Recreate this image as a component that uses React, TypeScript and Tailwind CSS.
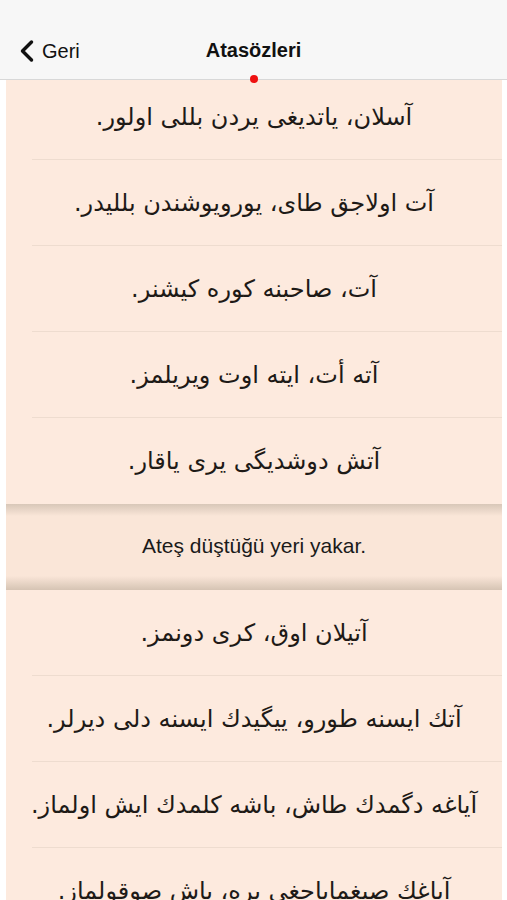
import { ChevronLeft } from "lucide-react";

const top = [
  "آسلان، یاتدیغی یردن بللی اولور.",
  "آت اولاجق طای، یورویوشندن بللیدر.",
  "آت، صاحبنه کوره کیشنر.",
  "آته أت، ایته اوت ویریلمز.",
  "آتش دوشدیگی یری یاقار.",
];

const bottom = [
  "آتیلان اوق، کری دونمز.",
  "آتك ایسنه طورو، ییگیدك ایسنه دلی دیرلر.",
  "آیاغه دگمدك طاش، باشه کلمدك ایش اولماز.",
  "آیاغك صیغمایاجغی یره، باش صوقولماز.",
];

const Row = ({ text, last }: { text: string; last?: boolean }) => (
  <div className="h-[86px] flex flex-col shrink-0">
    <div
      dir="rtl"
      className="flex-1 flex items-center justify-center whitespace-nowrap text-[24px] text-[#1e1a17]"
      style={{ fontFamily: '"DejaVu Sans", serif' }}
    >
      {text}
    </div>
    {!last && <div className="ml-[26px] h-px bg-[#eedccf]" />}
  </div>
);

export default function App() {
  return (
    <div
      className="w-[507px] h-[900px] overflow-hidden bg-white flex flex-col"
      style={{ fontFamily: '"Liberation Sans", Arial, sans-serif' }}
    >
      <div className="relative h-[80px] shrink-0 bg-[#f7f7f7] border-b border-[#d8d8d8] flex items-end pb-[10px]">
        <div className="flex items-center pl-[9px] text-[20px] text-[#111]">
          <ChevronLeft size={36} strokeWidth={2.3} className="-mr-[3px]" />
          <span>Geri</span>
        </div>
        <div className="absolute left-0 right-0 bottom-[14px] text-center text-[20px] font-bold text-[#111]">
          Atasözleri
        </div>
        <div className="absolute left-[250px] -bottom-[4px] w-[8px] h-[8px] rounded-full bg-[#ee1111]" />
      </div>
      <div className="ml-[6px] mr-[5px] flex-1 bg-[#fdeade] flex flex-col -mt-[6px]">
        {top.map((t, i) => (
          <Row key={i} text={t} last={i === top.length - 1} />
        ))}
        <div className="h-[86px] bg-[#fae6d8] flex flex-col shrink-0">
          <div className="h-[12px] bg-gradient-to-b from-[#d8c7b8] to-[#fae6d8]" />
          <div className="flex-1 flex items-center justify-center text-[21px] text-[#1a1a1a]">
            Ateş düştüğü yeri yakar.
          </div>
          <div className="h-[14px] bg-gradient-to-b from-[#fae6d8] to-[#d6c4b4]" />
        </div>
        {bottom.map((t, i) => (
          <Row key={i} text={t} />
        ))}
      </div>
    </div>
  );
}
